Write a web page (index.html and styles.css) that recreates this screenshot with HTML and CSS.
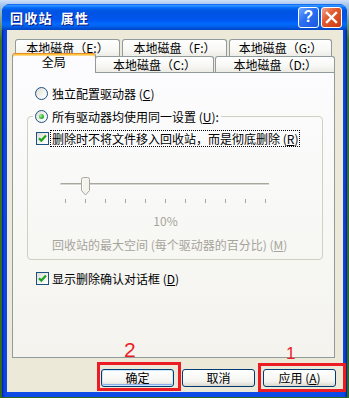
FILE: index.html
```html
<!DOCTYPE html>
<html>
<head>
<meta charset="utf-8">
<link rel="stylesheet" href="styles.css">
</head>
<body>
<div class="stage">
  <div class="window">
    <div class="titlebar">
      <span class="title">回收站 属性</span>
      <span class="tbtn help">?</span>
      <span class="tbtn close"><svg width="13" height="13" viewBox="0 0 13 13"><path d="M2 2 L11 11 M11 2 L2 11" stroke="#fff" stroke-width="2.4" stroke-linecap="square"/></svg></span>
    </div>
    <div class="client">
      <div class="tabrow back">
        <div class="tab wide">本地磁盘（E:）</div>
        <div class="tab wide">本地磁盘（F:）</div>
        <div class="tab narrow">本地磁盘（G:）</div>
      </div>
      <div class="tabrow front">
        <div class="tab sel">全局</div>
        <div class="tab tc">本地磁盘（C:）</div>
        <div class="tab td">本地磁盘（D:）</div>
      </div>
      <div class="panel">
        <div class="opt r1"><span class="radio"></span><span>独立配置驱动器 (<u>C</u>)</span></div>
        <fieldset class="group">
          <legend class="legend"><span class="radio on"></span><span>所有驱动器均使用同一设置 (<u>U</u>):</span></legend>
          <div class="opt c1"><span class="check"><svg width="11" height="11" viewBox="0 0 11 11"><path d="M2 5.2 L4.3 7.6 L9 2.6" fill="none" stroke="#21A121" stroke-width="2.2"/></svg></span><span class="focus">删除时不将文件移入回收站，而是彻底删除 (<u>R</u>)</span></div>
          <div class="slider">
            <div class="track"></div>
            <svg class="thumb" width="11" height="19" viewBox="0 0 11 19"><path d="M1.5 2.5 Q1.5 0.5 3.5 0.5 H7.5 Q9.5 0.5 9.5 2.5 V13.5 L5.5 18 L1.5 13.5 Z" fill="#F4F3EE" stroke="#A9A79C"/><path d="M2.5 2.5 V13" stroke="#fff"/></svg>
          </div>
          <div class="ticks"><i></i><i></i><i></i><i></i><i></i><i></i><i></i><i></i><i></i><i></i><i></i></div>
          <div class="pct">10%</div>
          <div class="maxlabel">回收站的最大空间 (每个驱动器的百分比) (<u>M</u>)</div>
        </fieldset>
        <div class="opt c2"><span class="check"><svg width="11" height="11" viewBox="0 0 11 11"><path d="M2 5.2 L4.3 7.6 L9 2.6" fill="none" stroke="#21A121" stroke-width="2.2"/></svg></span><span>显示删除确认对话框 (<u>D</u>)</span></div>
      </div>
      <div class="buttons">
        <span class="btn default">确定</span>
        <span class="btn">取消</span>
        <span class="btn">应用 (<u>A</u>)</span>
      </div>
    </div>
  </div>
  <div class="mark box1"></div>
  <div class="mark box2"></div>
  <div class="num n2">2</div>
  <div class="num n1">1</div>
</div>
</body>
</html>
```
FILE: styles.css
```css
* { box-sizing: border-box; }
html, body { margin: 0; padding: 0; }
body {
  width: 349px;
  height: 398px;
  overflow: hidden;
  font-family: "Noto Sans CJK SC", "Noto Sans", sans-serif;
  font-size: 12px;
  color: #000;
}
.stage {
  position: relative;
  width: 349px;
  height: 398px;
  padding: 4px 2px 0 2px;
  background: linear-gradient(to bottom, #cfe0f8 0px, #a6c4ee 5px, #3d7422 40px, #2f6a1c 100%);
}
.window {
  width: 345px;
  height: 393px;
  display: flex;
  flex-direction: column;
  background: linear-gradient(to right, #0019b8 0px, #0a43dc 2px, #0d4ae6 5px, #0d4ae6 calc(100% - 4px), #0a3ed8 calc(100% - 2px), #001ea0 100%);
  border-radius: 8px 8px 0 0;
}
.titlebar {
  height: 26px;
  display: flex;
  align-items: center;
  padding: 0 5px 0 8px;
  gap: 2px;
  border-radius: 8px 8px 0 0;
  background: linear-gradient(to bottom, #0058ee 0%, #3593ff 5%, #288eff 8%, #127dff 11%, #036ffc 14%, #0262ee 19%, #0057e5 25%, #0054e3 30%, #0055eb 56%, #005bf5 66%, #026afe 76%, #0062ef 86%, #0052d6 92%, #0046c4 100%);
}
.title {
  flex: 1;
  color: #fff;
  font-weight: 700;
  font-size: 13px;
  letter-spacing: 1.2px;
  word-spacing: 4px;
  text-shadow: 1px 1px 0 #0a1a80;
  white-space: pre;
}
.tbtn {
  width: 21px;
  height: 21px;
  border: 1px solid #fff;
  border-radius: 3px;
  display: flex;
  align-items: center;
  justify-content: center;
}
.help {
  background: linear-gradient(135deg, #6ea6ff 0%, #2a6ff3 45%, #1c58dc 100%);
  color: #fff;
  font-family: "Liberation Sans", sans-serif;
  font-weight: 700;
  font-size: 16px;
}
.close {
  background: linear-gradient(135deg, #f0a28a 0%, #e35a2e 40%, #cc3a12 100%);
}
.client {
  flex: 1;
  margin: 0 4px 5px 5px;
  background: #ece9d8;
  padding: 9px 8px 0 5px;
  display: flex;
  flex-direction: column;
}
.tabrow {
  display: flex;
  align-items: flex-end;
}
.tabrow.back {
  height: 18px;
  margin-left: 3px;
  gap: 2px;
}
.tabrow.front {
  height: 16px;
  margin-top: -1px;
  position: relative;
  z-index: 1;
}
.tab {
  height: 100%;
  border: 1px solid #919b9c;
  border-bottom: none;
  border-radius: 3px 3px 0 0;
  background: linear-gradient(to bottom, #ffffff 0%, #f7f7f4 60%, #ecebe5 100%);
  display: flex;
  align-items: center;
  justify-content: center;
  white-space: nowrap;
  line-height: 12px;
}
.back .tab { padding-bottom: 1px; }
.wide { width: 105px; }
.narrow { width: 103px; }
.tab.sel {
  width: 84px;
  height: 20px;
  margin-bottom: -1px;
  background: #fcfcfe;
  border-top: 1px solid #e68b2c;
  box-shadow: inset 0 1px 0 #ffc73c, inset 0 2px 0 #ffd78a;
  padding-bottom: 3px;
  position: relative;
  z-index: 2;
}
.tab.tc { width: 120px; margin-left: -1px; }
.tab.td { width: 120px; margin-left: 1px; }
.panel {
  width: 323px;
  height: 286px;
  border: 1px solid #919b9c;
  background: linear-gradient(to bottom, #fcfcfe 0%, #f7f7f4 60%, #f4f3ee 100%);
  padding-top: 12px;
}
.opt {
  display: flex;
  align-items: center;
  height: 16px;
  white-space: nowrap;
}
.r1 { margin-left: 22px; gap: 4px; }
.radio {
  width: 13px;
  height: 13px;
  border: 1px solid #1c5180;
  border-radius: 50%;
  background: linear-gradient(135deg, #dcdcd6 0%, #f2f2ef 55%, #ffffff 100%);
  position: relative;
  flex: none;
}
.radio.on::after {
  content: "";
  position: absolute;
  left: 3px;
  top: 3px;
  width: 5px;
  height: 5px;
  border-radius: 50%;
  background: radial-gradient(circle at 35% 35%, #a6f0a6 0%, #3bb83b 50%, #17941a 100%);
}
.check {
  width: 13px;
  height: 13px;
  border: 1px solid #1c5180;
  background: linear-gradient(135deg, #dcdcd6 0%, #f2f2ef 55%, #ffffff 100%);
  display: flex;
  align-items: center;
  justify-content: center;
  flex: none;
}
.group {
  margin: 7px 0 0 14px;
  width: 296px;
  padding: 0 0 8px 0;
  border: 1px solid #d0d0bf;
  border-radius: 4px;
  min-width: 0;
}
.legend {
  display: flex;
  align-items: center;
  gap: 4px;
  height: 16px;
  margin-left: 5px;
  padding: 0 2px;
  white-space: nowrap;
}
.c1 { margin: 6px 0 0 8px; gap: 2px; }
.focus {
  outline: 1px dotted #000;
  outline-offset: 0;
  padding: 1px 1px 0 1px;
  line-height: 14px;
}
.slider {
  margin: 30px 0 0 32px;
  width: 209px;
  height: 20px;
  position: relative;
  display: flex;
  flex-direction: column;
  padding-top: 7px;
}
.track {
  height: 3px;
  border-top: 1px solid #a9a89f;
  border-bottom: 1px solid #ffffff;
  background: #d6d4cc;
  border-radius: 2px 0 0 2px;
}
.thumb {
  position: absolute;
  left: 20px;
  top: 1px;
}
.ticks {
  margin: 3px 0 0 37px;
  width: 201px;
  height: 4px;
  display: flex;
  justify-content: space-between;
}
.ticks i {
  width: 1px;
  height: 4px;
  background: #a8a8a0;
}
.pct {
  margin: 12px 0 0 37px;
  width: 201px;
  height: 12px;
  line-height: 12px;
  text-align: center;
  color: #a6a49a;
}
.maxlabel {
  margin: 12px 0 0 24px;
  height: 12px;
  line-height: 12px;
  color: #a6a49a;
  white-space: nowrap;
}
.c2 { margin: 10px 0 0 23px; gap: 3px; }
.buttons {
  margin-top: 11px;
  margin-right: -1px;
  display: flex;
  justify-content: flex-end;
  gap: 8px;
}
.btn {
  width: 73px;
  height: 18px;
  border: 1px solid #003c74;
  border-radius: 3px;
  background: linear-gradient(to bottom, #ffffff 0%, #f4f4f0 70%, #dcd8cc 100%);
  display: flex;
  align-items: center;
  justify-content: center;
  line-height: 12px;
  white-space: nowrap;
}
.btn.default {
  box-shadow: inset 0 0 0 1px #cee7ff, inset 0 -1px 0 1px #8aaeec;
}
.mark {
  position: absolute;
  border: 3px solid #ec1c24;
}
.box1 { left: 97px; top: 362px; width: 84px; height: 29px; }
.box2 { left: 258px; top: 363px; width: 88px; height: 29px; }
.num {
  position: absolute;
  color: #ee1c25;
  font-family: "Liberation Sans", sans-serif;
  line-height: 1;
}
.n2 { left: 124px; top: 339px; font-size: 21px; }
.n1 { left: 286px; top: 345px; font-size: 17px; }
```
